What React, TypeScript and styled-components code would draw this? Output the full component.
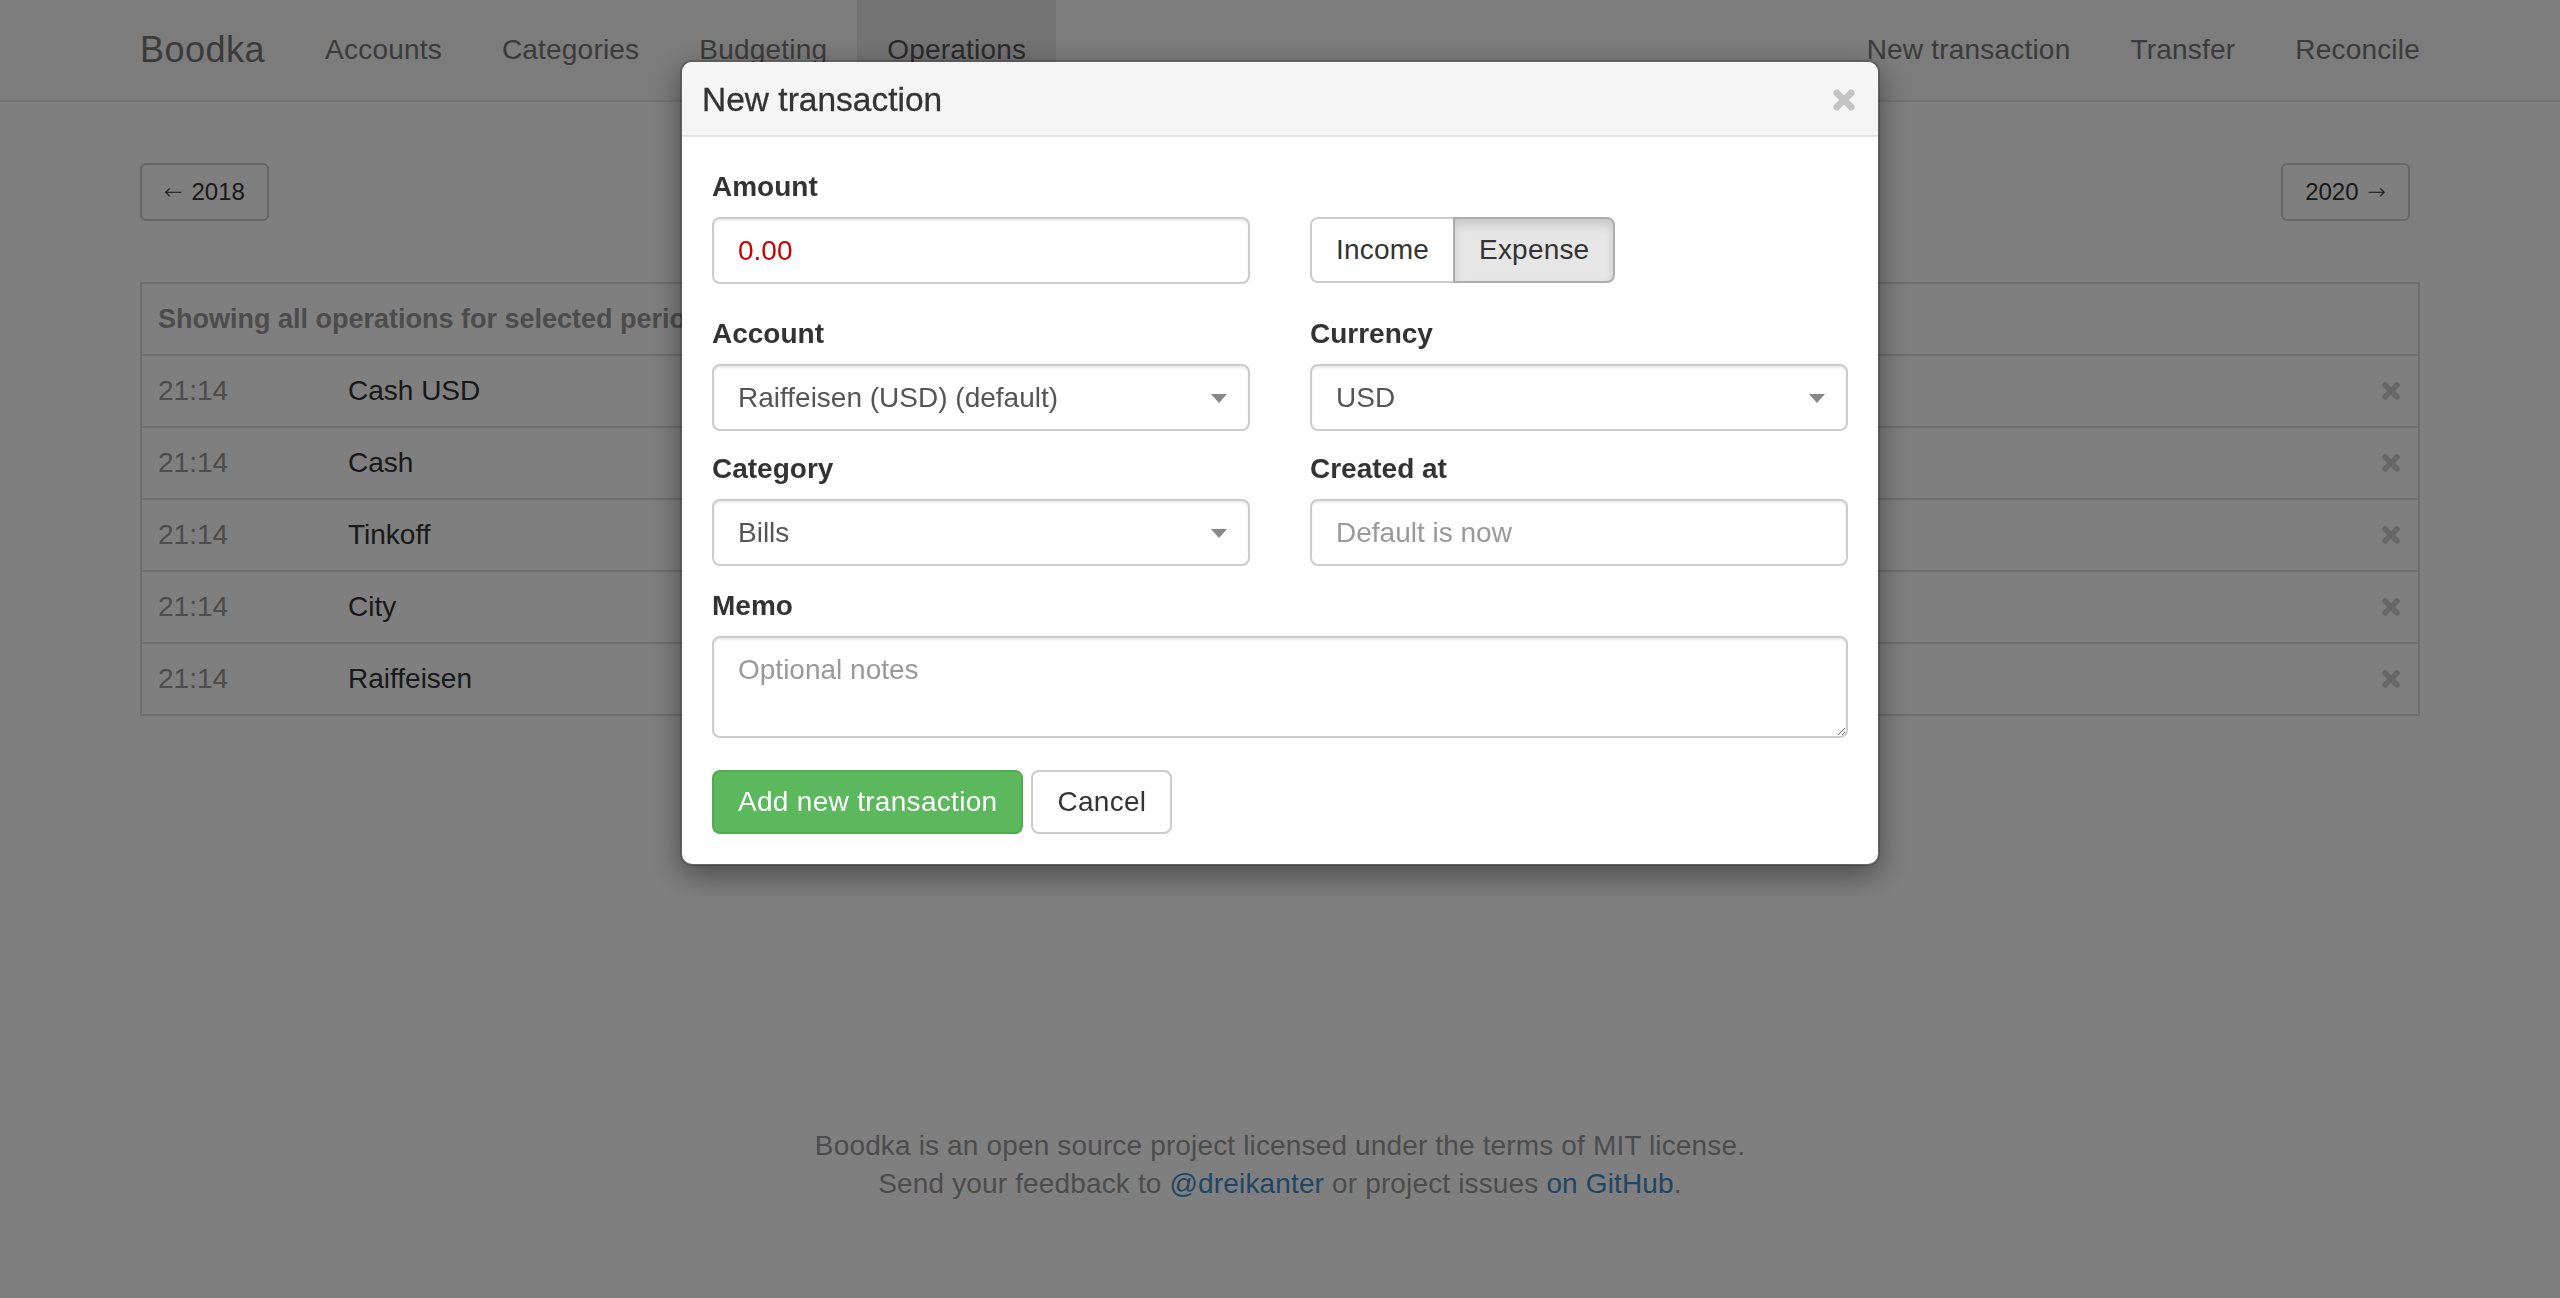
import React from "react";
import styled, { createGlobalStyle } from "styled-components";

const GlobalStyle = createGlobalStyle`
  html, body { margin: 0; padding: 0; background: #fff; }
  body {
    font-family: "Liberation Sans", Arial, Helvetica, sans-serif;
    font-size: 28px;
    line-height: 40px;
    color: #333;
  }
  *, *::before, *::after { box-sizing: border-box; }
`;

const Page = styled.div`
  min-height: 1298px;
`;

const Navbar = styled.nav`
  height: 102px;
  background: #f8f8f8;
  border-bottom: 2px solid #e7e7e7;
  margin-bottom: 40px;
`;

const NavInner = styled.div`
  width: 2340px;
  margin: 0 auto;
  height: 100px;
  display: flex;
  align-items: stretch;
`;

const Brand = styled.a`
  display: block;
  padding: 30px;
  font-size: 36px;
  line-height: 40px;
  letter-spacing: 0.5px;
  color: #777;
  text-decoration: none;
`;

const NavList = styled.ul<{ $right?: boolean }>`
  list-style: none;
  margin: 0;
  margin-left: ${(p) => (p.$right ? "auto" : "0")};
  padding: 0;
  display: flex;
`;

const NavLink = styled.a<{ $active?: boolean }>`
  display: block;
  padding: 30px;
  font-size: 28px;
  line-height: 40px;
  letter-spacing: 0.2px;
  color: ${(p) => (p.$active ? "#555" : "#777")};
  background: ${(p) => (p.$active ? "#e7e7e7" : "transparent")};
  text-decoration: none;
`;

const Container = styled.div`
  width: 2280px;
  margin: 0 auto;
`;

const PagerRow = styled.div`
  display: flex;
  justify-content: space-between;
  padding-top: 21px;
  padding-right: 10px;
`;

const PagerButton = styled.button`
  height: 58px;
  padding: 0 22px;
  display: inline-flex;
  align-items: center;
  gap: 9px;
  font-family: inherit;
  font-size: 24px;
  color: #333;
  background: #fff;
  border: 2px solid #ccc;
  border-radius: 6px;
`;

const Arrow = styled.span`
  font-family: "DejaVu Sans", "Liberation Sans", sans-serif;
  font-size: 22px;
  font-weight: 300;
  line-height: 1;
`;

const Panel = styled.div`
  margin-top: 61px;
  border: 2px solid #ddd;
`;

const PanelHeading = styled.div`
  height: 70px;
  padding: 0 16px;
  display: flex;
  align-items: center;
  font-size: 27px;
  font-weight: bold;
  color: #999;
`;

const OpRow = styled.div`
  height: 72px;
  border-top: 2px solid #ddd;
  display: flex;
  align-items: center;
`;

const TimeCell = styled.div`
  width: 190px;
  padding-left: 16px;
  color: #999;
`;

const NameCell = styled.div`
  flex: 1;
  padding-left: 16px;
  color: #333;
`;

const DeleteCell = styled.div`
  width: 60px;
  padding-right: 17px;
  display: flex;
  justify-content: flex-end;
  align-items: center;
`;

const Footer = styled.footer`
  margin-top: 411px;
  text-align: center;
  color: #999;
  font-size: 28px;
  line-height: 38px;
  letter-spacing: 0.15px;
`;

const FooterLink = styled.a`
  color: #428bca;
  text-decoration: none;
`;

const Backdrop = styled.div`
  position: fixed;
  inset: 0;
  background: rgba(0, 0, 0, 0.5);
`;

const Modal = styled.div`
  position: fixed;
  top: 60px;
  left: 50%;
  margin-left: -600px;
  width: 1200px;
  background: #fff;
  background-clip: padding-box;
  border: 2px solid rgba(0, 0, 0, 0.2);
  border-radius: 12px;
  box-shadow: 0 10px 30px rgba(0, 0, 0, 0.4);
`;

const ModalHeader = styled.div`
  display: flex;
  align-items: center;
  padding: 17px 22px 15px 20px;
  background: #f5f5f5;
  border-bottom: 2px solid #e5e5e5;
  border-radius: 10px 10px 0 0;
`;

const ModalTitle = styled.h4`
  margin: 0;
  font-size: 33.5px;
  line-height: 41px;
  font-weight: normal;
  color: #333;
  -webkit-text-stroke: 0.3px #333;
`;

const CloseButton = styled.button`
  margin-left: auto;
  padding: 0;
  border: 0;
  background: transparent;
  display: flex;
  align-items: center;
`;

const ModalBody = styled.div`
  padding: 30px;
`;

const FormRow = styled.div<{ $gap: number }>`
  display: grid;
  grid-template-columns: 1fr 1fr;
  column-gap: 60px;
  margin-bottom: ${(p) => p.$gap}px;
`;

const FormGroup = styled.div<{ $gap?: number }>`
  margin-bottom: ${(p) => p.$gap ?? 0}px;
`;

const Label = styled.label`
  display: block;
  font-weight: bold;
  font-size: 28px;
  line-height: 40px;
  margin-bottom: 10px;
  color: #333;
  min-height: 40px;
`;

const fieldBase = `
  display: block;
  width: 100%;
  padding: 12px 24px;
  font-family: inherit;
  font-size: 28px;
  line-height: 40px;
  color: #555;
  background: #fff;
  border: 2px solid #ccc;
  border-radius: 8px;
  box-shadow: inset 0 2px 2px rgba(0, 0, 0, 0.075);
  outline: none;
  &::placeholder { color: #999; }
`;

const TextInput = styled.input<{ $danger?: boolean }>`
  ${fieldBase}
  height: 67px;
  color: ${(p) => (p.$danger ? "#c00" : "#555")};
`;

const SelectWrap = styled.div`
  position: relative;
`;

const Select = styled.select`
  ${fieldBase}
  height: 67px;
  appearance: none;
  -webkit-appearance: none;
  padding-top: 0;
  padding-bottom: 0;
`;

const Caret = styled.span`
  position: absolute;
  right: 23px;
  top: 50%;
  margin-top: -4px;
  width: 0;
  height: 0;
  border-left: 8px solid transparent;
  border-right: 8px solid transparent;
  border-top: 9px solid #888;
  pointer-events: none;
`;

const TextArea = styled.textarea`
  ${fieldBase}
  height: 102px;
  resize: vertical;
`;

const BtnGroup = styled.div`
  display: inline-flex;
`;

const SegmentButton = styled.button<{ $active?: boolean; $first?: boolean }>`
  height: 66px;
  padding: 0 24px;
  font-family: inherit;
  font-size: 28px;
  letter-spacing: 0.2px;
  color: #333;
  background: ${(p) => (p.$active ? "#e6e6e6" : "#fff")};
  border: 2px solid ${(p) => (p.$active ? "#adadad" : "#ccc")};
  border-radius: ${(p) => (p.$first ? "8px 0 0 8px" : "0 8px 8px 0")};
  margin-left: ${(p) => (p.$first ? "0" : "-2px")};
  box-shadow: ${(p) => (p.$active ? "inset 0 6px 10px rgba(0,0,0,0.125)" : "none")};
  position: relative;
`;

const Actions = styled.div`
  display: flex;
  gap: 8px;
`;

const ActionButton = styled.button<{ $primary?: boolean }>`
  height: 64px;
  padding: 0 24px;
  font-family: inherit;
  font-size: 28px;
  letter-spacing: 0.3px;
  border-radius: 8px;
  color: ${(p) => (p.$primary ? "#fff" : "#333")};
  background: ${(p) => (p.$primary ? "#5cb85c" : "#fff")};
  border: 2px solid ${(p) => (p.$primary ? "#4cae4c" : "#ccc")};
`;

const XIcon = ({ size, color }: { size: number; color: string }) => (
  <svg width={size} height={size} viewBox="0 0 20 20" aria-hidden="true">
    <path
      d="M4 4 L16 16 M16 4 L4 16"
      stroke={color}
      strokeWidth="5.6"
      strokeLinecap="round"
      fill="none"
    />
  </svg>
);

const operations = ["Cash USD", "Cash", "Tinkoff", "City", "Raiffeisen"];

export default function App() {
  return (
    <Page>
      <GlobalStyle />
      <Navbar>
        <NavInner>
          <Brand href="#">Boodka</Brand>
          <NavList>
            <li><NavLink href="#">Accounts</NavLink></li>
            <li><NavLink href="#">Categories</NavLink></li>
            <li><NavLink href="#">Budgeting</NavLink></li>
            <li><NavLink href="#" $active>Operations</NavLink></li>
          </NavList>
          <NavList $right>
            <li><NavLink href="#">New transaction</NavLink></li>
            <li><NavLink href="#">Transfer</NavLink></li>
            <li><NavLink href="#">Reconcile</NavLink></li>
          </NavList>
        </NavInner>
      </Navbar>

      <Container>
        <PagerRow>
          <PagerButton><Arrow>←</Arrow>2018</PagerButton>
          <PagerButton>2020<Arrow>→</Arrow></PagerButton>
        </PagerRow>

        <Panel>
          <PanelHeading>Showing all operations for selected period</PanelHeading>
          {operations.map((name) => (
            <OpRow key={name}>
              <TimeCell>21:14</TimeCell>
              <NameCell>{name}</NameCell>
              <DeleteCell><XIcon size={20} color="#cfcfcf" /></DeleteCell>
            </OpRow>
          ))}
        </Panel>

        <Footer>
          Boodka is an open source project licensed under the terms of MIT license.
          <br />
          Send your feedback to <FooterLink href="#">@dreikanter</FooterLink> or project issues{" "}
          <FooterLink href="#">on GitHub</FooterLink>.
        </Footer>
      </Container>

      <Backdrop />

      <Modal>
        <ModalHeader>
          <ModalTitle>New transaction</ModalTitle>
          <CloseButton aria-label="Close"><XIcon size={24} color="#c4c4c4" /></CloseButton>
        </ModalHeader>
        <ModalBody>
          <FormRow $gap={30}>
            <FormGroup>
              <Label>Amount</Label>
              <TextInput $danger defaultValue="0.00" />
            </FormGroup>
            <FormGroup>
              <Label aria-hidden="true"></Label>
              <BtnGroup>
                <SegmentButton $first>Income</SegmentButton>
                <SegmentButton $active>Expense</SegmentButton>
              </BtnGroup>
            </FormGroup>
          </FormRow>
          <FormRow $gap={18}>
            <FormGroup>
              <Label>Account</Label>
              <SelectWrap>
                <Select defaultValue="r">
                  <option value="r">Raiffeisen (USD) (default)</option>
                </Select>
                <Caret />
              </SelectWrap>
            </FormGroup>
            <FormGroup>
              <Label>Currency</Label>
              <SelectWrap>
                <Select defaultValue="usd">
                  <option value="usd">USD</option>
                </Select>
                <Caret />
              </SelectWrap>
            </FormGroup>
          </FormRow>
          <FormRow $gap={20}>
            <FormGroup>
              <Label>Category</Label>
              <SelectWrap>
                <Select defaultValue="bills">
                  <option value="bills">Bills</option>
                </Select>
                <Caret />
              </SelectWrap>
            </FormGroup>
            <FormGroup>
              <Label>Created at</Label>
              <TextInput placeholder="Default is now" />
            </FormGroup>
          </FormRow>
          <FormGroup $gap={32}>
            <Label>Memo</Label>
            <TextArea placeholder="Optional notes" />
          </FormGroup>
          <Actions>
            <ActionButton $primary>Add new transaction</ActionButton>
            <ActionButton>Cancel</ActionButton>
          </Actions>
        </ModalBody>
      </Modal>
    </Page>
  );
}
